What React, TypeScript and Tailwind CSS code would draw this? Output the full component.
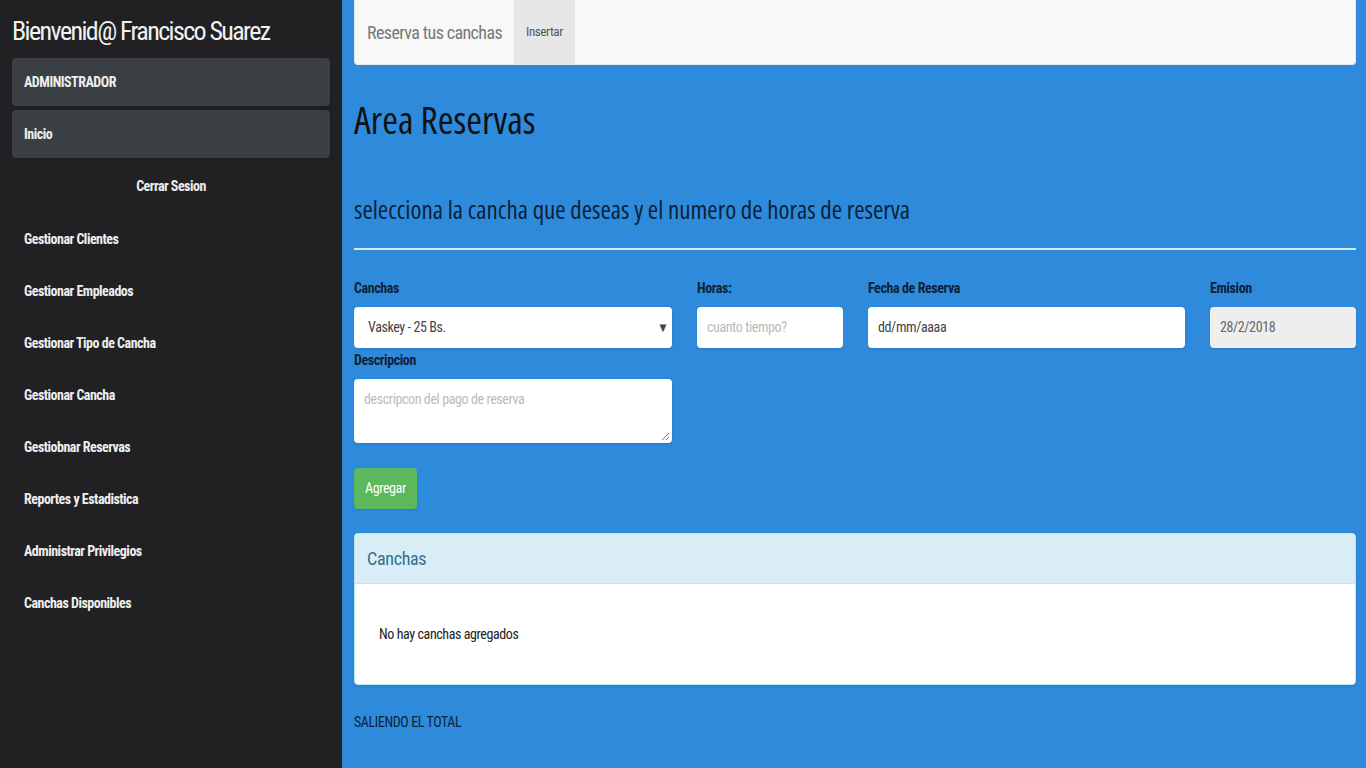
const narrow =
  "font-['Roboto_Condensed','Liberation_Sans_Narrow','DejaVu_Sans_Condensed','Arial_Narrow',sans-serif] [font-stretch:condensed]";

const menu = [
  "Gestionar Clientes",
  "Gestionar Empleados",
  "Gestionar Tipo de Cancha",
  "Gestionar Cancha",
  "Gestiobnar Reservas",
  "Reportes y Estadistica",
  "Administrar Privilegios",
  "Canchas Disponibles",
];

function Sidebar() {
  return (
    <aside className="w-[342px] shrink-0 bg-[#212123] min-h-screen">
      <h1 className="px-3 pt-[14px] pb-[10px] text-[26px] leading-[34px] tracking-[-1.6px] text-[#f2f2f2] whitespace-nowrap">
        Bienvenid@ Francisco Suarez
      </h1>
      <div className="flex flex-col gap-1 px-3">
        <div className="h-12 rounded bg-[#3a3f44] px-3 flex items-center text-[14px] font-bold tracking-[-0.5px] text-[#eee] shadow">
          ADMINISTRADOR
        </div>
        <div className="h-12 rounded bg-[#3a3f44] px-3 flex items-center text-[14px] font-bold tracking-[-0.5px] text-[#eee] shadow">
          Inicio
        </div>
      </div>
      <div className="mt-[18px] text-center text-[14px] font-bold tracking-[-0.5px] text-[#eee]">
        Cerrar Sesion
      </div>
      <ul className="mt-[32px] flex flex-col gap-[32px] px-6">
        {menu.map((m) => (
          <li key={m} className="text-[14px] leading-[20px] font-bold tracking-[-0.5px] text-[#eee]">
            {m}
          </li>
        ))}
      </ul>
    </aside>
  );
}

function Label({ children }: { children: React.ReactNode }) {
  return (
    <label className="block text-[14px] leading-5 font-bold tracking-[-0.4px] text-[#0e2238] mb-[9px]">
      {children}
    </label>
  );
}

export default function App() {
  return (
    <div className={`flex min-h-screen ${narrow}`}>
      <Sidebar />
      <main className="flex-1 bg-[#2e8bdc] px-3 pb-10">
        <nav className="h-[65px] bg-[#f8f8f8] border border-t-0 border-[#e7e7e7] rounded-b flex items-stretch">
          <div className="px-3 flex items-center text-[18px] tracking-[-0.6px] text-[#777]">
            Reserva tus canchas
          </div>
          <div className="px-3 flex items-center bg-[#e7e7e7] text-[13px] tracking-[-0.4px] text-[#555]">
            Insertar
          </div>
        </nav>

        <h2 className="mt-[32px] text-[38px] leading-[44px] text-[#111] font-['Open_Sans',sans-serif]">
          Area Reservas
        </h2>
        <h3 className="mt-[53px] text-[25px] leading-[30px] text-[#0d2238] font-['Open_Sans',sans-serif]">
          selecciona la cancha que deseas y el numero de horas de reserva
        </h3>
        <hr className="mt-[24px] border-0 h-[2px] bg-[#d6ebfa]" />

        <div className="mt-[28px] grid grid-cols-[318px_146px_317px_146px] gap-x-[25px] justify-between">
          <div>
            <Label>Canchas</Label>
            <div className="h-[41px] rounded bg-white shadow-sm flex items-center justify-between pl-[14px] pr-[6px] text-[14px] tracking-[-0.4px] text-[#444]">
              <span>Vaskey - 25 Bs.</span>
              <span className="text-[10px] text-[#444]">▼</span>
            </div>
          </div>
          <div>
            <Label>Horas:</Label>
            <div className="h-[41px] rounded bg-white shadow-sm flex items-center px-[10px] text-[14px] tracking-[-0.4px] text-[#bbb]">
              cuanto tiempo?
            </div>
          </div>
          <div>
            <Label>Fecha de Reserva</Label>
            <div className="h-[41px] rounded bg-white shadow-sm flex items-center px-[10px] text-[14px] tracking-[-0.4px] text-[#444]">
              dd/mm/aaaa
            </div>
          </div>
          <div>
            <Label>Emision</Label>
            <div className="h-[41px] rounded bg-[#eeeeee] shadow-sm flex items-center px-[10px] text-[14px] tracking-[-0.4px] text-[#666]">
              28/2/2018
            </div>
          </div>
        </div>

        <div className="mt-[2px] w-[318px]">
          <Label>Descripcion</Label>
          <div className="relative h-[64px] rounded bg-white shadow-sm px-[10px] pt-[10px] text-[14px] leading-5 tracking-[-0.4px] text-[#bbb]">
            descripcon del pago de reserva
            <svg className="absolute right-[2px] bottom-[2px]" width="10" height="10" viewBox="0 0 10 10">
              <path d="M9 2 L2 9 M9 6 L6 9" stroke="#777" strokeWidth="1" />
            </svg>
          </div>
        </div>

        <button className="mt-[25px] h-[41px] px-[11px] rounded bg-[#5cb85c] text-white text-[14px] tracking-[-0.4px] shadow-sm">
          Agregar
        </button>

        <section className="mt-[24px] rounded border border-[#bce8f1] bg-white overflow-hidden shadow-sm">
          <div className="h-[50px] bg-[#d9edf7] border-b border-[#bce8f1] px-3 flex items-center text-[18px] tracking-[-0.3px] text-[#31708f]">
            Canchas
          </div>
          <div className="px-6 pt-[40px] pb-[40px] text-[14px] leading-5 tracking-[-0.4px] text-[#222]">
            No hay canchas agregados
          </div>
        </section>

        <p className="mt-[27px] text-[14px] leading-5 tracking-[-0.4px] text-[#0e2238]">SALIENDO EL TOTAL</p>
      </main>
    </div>
  );
}
